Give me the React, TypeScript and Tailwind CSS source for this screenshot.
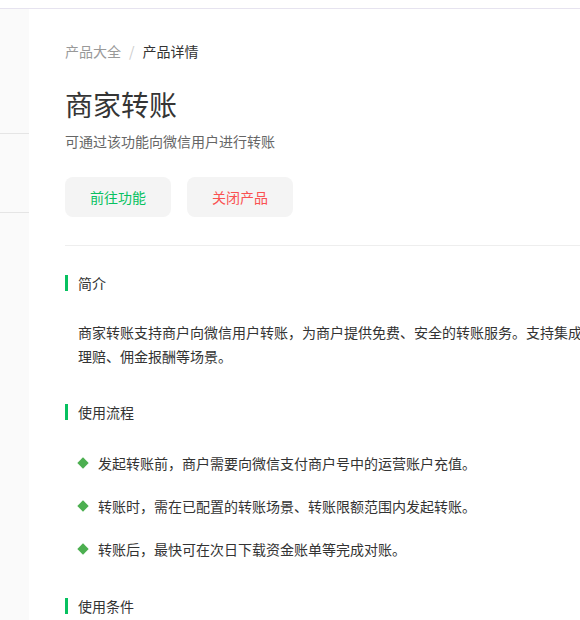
import React from "react";

const font = { fontFamily: '"Noto Sans CJK SC", "Noto Sans", sans-serif' };

function SectionTitle({ children }: { children: React.ReactNode }) {
  return (
    <div className="flex items-center h-[20px]">
      <div className="w-[3px] h-[16px] bg-[#07c160]" />
      <div className="ml-[10px] text-[14px] leading-[20px] text-[#333333]">{children}</div>
    </div>
  );
}

function Bullet({ children }: { children: React.ReactNode }) {
  return (
    <div className="flex items-center h-[20px] pl-[14px]">
      <div className="w-[8px] h-[8px] bg-[#4caf50] rotate-45" />
      <div className="ml-[11px] text-[14px] leading-[20px] text-[#333333] whitespace-nowrap">{children}</div>
    </div>
  );
}

export default function App() {
  return (
    <div className="w-[580px] h-[620px] overflow-hidden bg-white" style={font}>
      <div className="h-[8px] bg-white" />
      <div className="h-px bg-[#e6e3ef]" />
      <div className="flex h-[611px]">
        <div className="w-[29px] shrink-0 bg-[#fafafa] flex flex-col">
          <div className="h-[125px] border-b border-[#e5e5e5]" />
          <div className="h-[79px] border-b border-[#e5e5e5]" />
        </div>
        <div className="w-[900px] shrink-0 pl-[36px] pt-[32px]">
          <div className="flex items-center text-[14px] leading-[20px]">
            <span className="text-[#999999]">产品大全</span>
            <span className="mx-[8px] text-[#cccccc]">/</span>
            <span className="text-[#333333]">产品详情</span>
          </div>
          <div className="mt-[23px] text-[28px] leading-[40px] text-[#353535]">商家转账</div>
          <div className="mt-[7px] text-[14px] leading-[20px] text-[#666666]">可通过该功能向微信用户进行转账</div>
          <div className="mt-[26px] flex gap-[16px]">
            <button className="w-[106px] h-[40px] rounded-[8px] bg-[#f4f4f4] text-[14px] text-[#07c160]">前往功能</button>
            <button className="w-[106px] h-[40px] rounded-[8px] bg-[#f4f4f4] text-[14px] text-[#fa5151]">关闭产品</button>
          </div>
          <div className="mt-[28px] h-px bg-[#eeeeee]" />
          <div className="mt-[27px]">
            <SectionTitle>简介</SectionTitle>
          </div>
          <div className="mt-[27px] pl-[13px] w-[540px] text-[14px] leading-[24px] text-[#333333]">
            <div className="whitespace-nowrap">商家转账支持商户向微信用户转账，为商户提供免费、安全的转账服务。支持集成到商户自己的业务系统中，适用于费用报销、员工福利、合作伙伴货款或服务款项支付、现金营销、保险</div>
            <div>理赔、佣金报酬等场景。</div>
          </div>
          <div className="mt-[34px]">
            <SectionTitle>使用流程</SectionTitle>
          </div>
          <div className="mt-[31px] flex flex-col gap-[23px]">
            <Bullet>发起转账前，商户需要向微信支付商户号中的运营账户充值。</Bullet>
            <Bullet>转账时，需在已配置的转账场景、转账限额范围内发起转账。</Bullet>
            <Bullet>转账后，最快可在次日下载资金账单等完成对账。</Bullet>
          </div>
          <div className="mt-[37px]">
            <SectionTitle>使用条件</SectionTitle>
          </div>
        </div>
      </div>
    </div>
  );
}
